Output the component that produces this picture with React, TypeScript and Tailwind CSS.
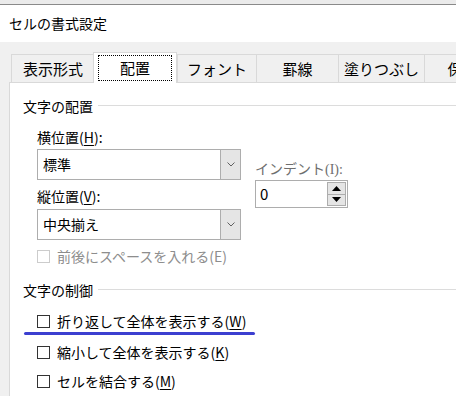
import React from 'react';

const FONT = { fontFamily: '"Segoe UI", "Noto Sans CJK JP", "Noto Sans", sans-serif' };

// タブ定義（幅はスクリーンショットに合わせて固定）
const tabs = [
  { label: '表示形式', w: 'w-[83px]' },
  { label: '配置', w: 'w-[84px]', active: true },
  { label: 'フォント', w: 'w-[79px]' },
  { label: '罫線', w: 'w-[82px]' },
  { label: '塗りつぶし', w: 'w-[86px]' },
  { label: '保護', w: 'w-[76px]' },
];

function Tab({ label, w, active }: { label: string; w: string; active?: boolean }) {
  if (active) {
    return (
      <div
        className={`${w} h-[31px] -mb-px -ml-px relative z-10 shrink-0 bg-white border border-b-0 border-[#d9d9d9] px-[4px] pt-[2px] pb-[2px] flex`}
      >
        <div className="flex-1 border border-dotted border-black flex items-center justify-center text-[15px] leading-[20px] text-black">
          {label}
        </div>
      </div>
    );
  }
  return (
    <div
      className={`${w} h-[28px] shrink-0 bg-[#f0f0f0] border border-b-0 border-r-0 border-[#d9d9d9] flex items-center justify-center text-[15px] leading-[20px] text-black whitespace-nowrap`}
    >
      {label}
    </div>
  );
}

function SectionHeader({ label }: { label: string }) {
  return (
    <div className="flex items-center h-[20px] pl-[13px]">
      <span className="text-[14px] leading-[20px] text-black whitespace-nowrap">{label}</span>
      <div className="flex-1 h-px bg-[#dcdcdc] ml-[5px] -mt-[1px]" />
    </div>
  );
}

function Combo({ value }: { value: string }) {
  return (
    <div className="w-[204px] h-[31px] border border-[#adadad] bg-white flex">
      <div className="flex-1 flex items-center pl-[5px] text-[14px] text-black">{value}</div>
      <div className="w-[20px] bg-[#e5e5e5] border-l border-[#adadad] flex items-center justify-center">
        <svg width="8" height="5" viewBox="0 0 8 5">
          <path d="M0.5 0.5 L4 4 L7.5 0.5" fill="none" stroke="#606060" strokeWidth="1" />
        </svg>
      </div>
    </div>
  );
}

function Check({ label, keyChar, disabled }: { label: string; keyChar: string; disabled?: boolean }) {
  return (
    <div className="flex items-center h-[20px] pl-[27px]">
      <div
        className={`w-[13px] h-[13px] border bg-white shrink-0 ${disabled ? 'border-[#cccccc]' : 'border-[#333333]'}`}
      />
      <span
        className={`ml-[7px] text-[14px] leading-[20px] whitespace-nowrap ${disabled ? 'text-[#8d8d8d]' : 'text-black'}`}
      >
        {label}(
        {disabled ? keyChar : <span className="underline underline-offset-2">{keyChar}</span>})
      </span>
    </div>
  );
}

export default function App() {
  return (
    <div className="relative w-[456px] h-[396px] overflow-hidden bg-[#f0f0f0]" style={FONT}>
      {/* ウィンドウ上端 */}
      <div className="h-[4px] bg-[#ebebeb]" />
      <div className="h-px bg-[#8a8a8a]" />

      {/* タイトルバー */}
      <div className="h-[37px] bg-white flex items-center pl-[9px] text-[14px] text-black">
        セルの書式設定
      </div>

      {/* タブ */}
      <div className="pt-[10px] pl-[9px]">
        <div className="flex items-end h-[30px] pl-[2px]">
          {tabs.map((t) => (
            <Tab key={t.label} {...t} />
          ))}
        </div>

        {/* パネル */}
        <div className="bg-white border-l border-t border-[#d9d9d9] h-[320px]">
          <div className="mt-[13px]">
            <SectionHeader label="文字の配置" />
          </div>

          <div className="flex mt-[11px] pl-[27px]">
            <div className="flex flex-col">
              <div className="h-[20px] text-[14px] leading-[20px] text-black">
                横位置(<span className="underline underline-offset-2">H</span>):
              </div>
              <div className="mt-[2px]">
                <Combo value="標準" />
              </div>
              <div className="mt-[6px] h-[20px] text-[14px] leading-[20px] text-black">
                縦位置(<span className="underline underline-offset-2">V</span>):
              </div>
              <div className="mt-[3px]">
                <Combo value="中央揃え" />
              </div>
            </div>

            <div className="flex flex-col pt-[31px] ml-[14px]">
              <div className="h-[20px] text-[14px] leading-[20px] text-[#6e6e6e] whitespace-nowrap">
                インデント<span style={{ fontFamily: '"Liberation Serif", serif' }}>(I):</span>
              </div>
              <div className="mt-[2px] w-[93px] h-[28px] border border-[#adadad] bg-white flex">
                <div className="flex-1 flex items-center pl-[4px] text-[15px] text-black">0</div>
                <div className="w-[20px] flex flex-col py-px pr-px">
                  <div className="flex-1 bg-[#e5e5e5] border border-[#adadad] flex items-center justify-center">
                    <svg width="9" height="5" viewBox="0 0 9 5">
                      <path d="M0 5 L4.5 0 L9 5 Z" fill="#000" />
                    </svg>
                  </div>
                  <div className="flex-1 bg-[#e5e5e5] border border-t-0 border-[#adadad] flex items-center justify-center">
                    <svg width="9" height="5" viewBox="0 0 9 5">
                      <path d="M0 0 L4.5 5 L9 0 Z" fill="#000" />
                    </svg>
                  </div>
                </div>
              </div>
            </div>
          </div>

          <div className="mt-[6px]">
            <Check label="前後にスペースを入れる" keyChar="E" disabled />
          </div>

          <div className="mt-[14px]">
            <SectionHeader label="文字の制御" />
          </div>

          <div className="mt-[11px]">
            <Check label="折り返して全体を表示する" keyChar="W" />
          </div>
          <div className="mt-[11px]">
            <Check label="縮小して全体を表示する" keyChar="K" />
          </div>
          <div className="mt-[9px]">
            <Check label="セルを結合する" keyChar="M" />
          </div>
        </div>
      </div>

      {/* 注釈の青い下線 */}
      <div className="absolute left-[24px] top-[332px] w-[231px] h-[3px] rounded-full bg-[#3c3fd0]" />
    </div>
  );
}
